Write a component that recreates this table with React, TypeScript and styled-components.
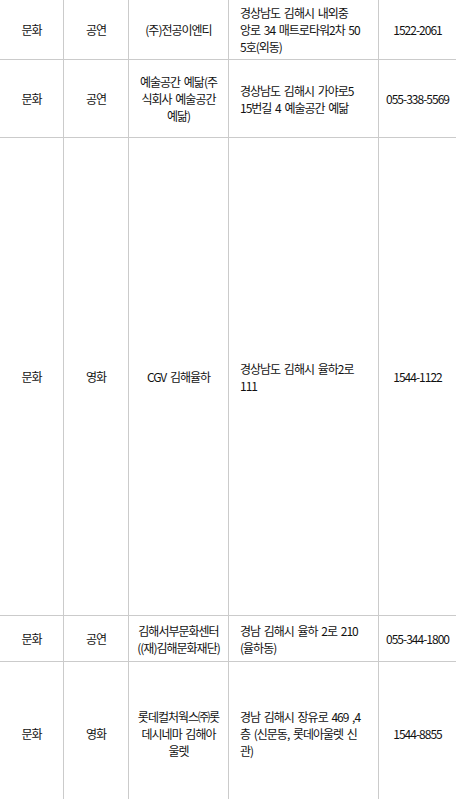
import React from 'react';
import styled, { createGlobalStyle } from 'styled-components';

const GlobalStyle = createGlobalStyle`
  html, body {
    margin: 0;
    padding: 0;
    background: #fff;
    overflow: hidden;
  }
  body {
    font-family: "Noto Sans CJK KR", "Noto Sans", sans-serif;
    color: #111;
  }
`;

const Table = styled.div`
  display: grid;
  grid-template-columns: 64px 65px 100px 150px 78px;
  width: 457px;
`;

const Cell = styled.div<{ $h: number; $left?: boolean }>`
  height: ${(p) => p.$h}px;
  box-sizing: border-box;
  border-right: 1px solid #cbcbcb;
  border-bottom: 1px solid #cbcbcb;
  display: flex;
  align-items: center;
  justify-content: ${(p) => (p.$left ? 'flex-start' : 'center')};
  padding: ${(p) => (p.$left ? '0 0 0 11px' : '0')};
  font-size: 12px;
  line-height: 17px;
  letter-spacing: -1px;
  word-spacing: 2px;
  text-align: ${(p) => (p.$left ? 'left' : 'center')};
  white-space: nowrap;
`;

type Row = {
  h: number;
  cells: string[][];
};

const rows: Row[] = [
  {
    h: 60,
    cells: [
      ['문화'],
      ['공연'],
      ['(주)전공이엔티'],
      ['경상남도 김해시 내외중', '앙로 34 매트로타워2차 50', '5호(외동)'],
      ['1522-2061'],
    ],
  },
  {
    h: 78,
    cells: [
      ['문화'],
      ['공연'],
      ['예술공간 예닮(주', '식회사 예술공간', '예닮)'],
      ['경상남도 김해시 가야로5', '15번길 4 예술공간 예닮'],
      ['055-338-5569'],
    ],
  },
  {
    h: 478,
    cells: [
      ['문화'],
      ['영화'],
      ['CGV 김해율하'],
      ['경상남도 김해시 율하2로', '111'],
      ['1544-1122'],
    ],
  },
  {
    h: 46,
    cells: [
      ['문화'],
      ['공연'],
      ['김해서부문화센터', '((재)김해문화재단)'],
      ['경남 김해시 율하 2로 210', '(율하동)'],
      ['055-344-1800'],
    ],
  },
  {
    h: 144,
    cells: [
      ['문화'],
      ['영화'],
      ['롯데컬처웍스㈜롯', '데시네마 김해아', '울렛'],
      ['경남 김해시 장유로 469 ,4', '층 (신문동, 롯데아울렛 신', '관)'],
      ['1544-8855'],
    ],
  },
];

const Lines = ({ lines }: { lines: string[] }) => (
  <div>
    {lines.map((l, i) => (
      <React.Fragment key={i}>
        {i > 0 && <br />}
        {l}
      </React.Fragment>
    ))}
  </div>
);

const App = () => (
  <>
    <GlobalStyle />
    <Table>
      {rows.map((row, r) =>
        row.cells.map((lines, c) => (
          <Cell key={`${r}-${c}`} $h={row.h} $left={c === 3}>
            <Lines lines={lines} />
          </Cell>
        ))
      )}
    </Table>
  </>
);

export default App;
